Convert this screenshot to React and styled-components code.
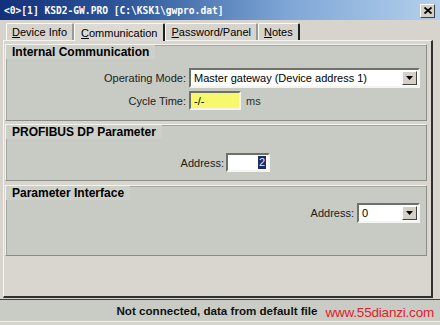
import React from 'react';
import styled, { createGlobalStyle } from 'styled-components';

const Global = createGlobalStyle`
  html, body {
    margin: 0;
    padding: 0;
    background: #d6d4cc;
  }
  * { box-sizing: border-box; }
`;

const Window = styled.div`
  position: relative;
  width: 440px;
  height: 325px;
  display: flex;
  flex-direction: column;
  background: #d6d4cc;
  font-family: "Liberation Sans", Arial, sans-serif;
  font-size: 11px;
  color: #000;
  overflow: hidden;
`;

const TitleBar = styled.div`
  height: 20px;
  flex: none;
  display: flex;
  align-items: center;
  justify-content: space-between;
  padding: 0 5px 0 4px;
  background: linear-gradient(90deg, #13307a 0%, #2f5a9c 30%, #7ea6d6 65%, #b4d0ec 100%);
`;

const Caption = styled.span`
  font-family: "DejaVu Sans Mono", "Liberation Mono", monospace;
  font-weight: bold;
  font-size: 9.6px;
  color: #fff;
  white-space: pre;
`;

const CloseBtn = styled.div`
  width: 15px;
  height: 14px;
  margin-top: 1px;
  display: flex;
  align-items: center;
  justify-content: center;
  background: #d4d0c8;
  border: 1px solid;
  border-color: #fff #404040 #404040 #fff;
`;

const Body = styled.div`
  flex: 1;
  display: flex;
  flex-direction: column;
  padding: 2px 7px 1px 3px;
`;

const TabStrip = styled.div`
  height: 18px;
  display: flex;
  align-items: flex-end;
  padding-left: 3px;
`;

const Tab = styled.div`
  height: ${p => (p.$active ? 18 : 17)}px;
  padding: 0 ${p => p.$pad || 4}px;
  display: flex;
  align-items: center;
  background: ${p => (p.$active ? '#dcdad3' : '#d6d4cc')};
  border-top: 1px solid #fafaf6;
  border-left: 1px solid #fafaf6;
  border-right: 2px solid ${p => (p.$dark ? '#202020' : '#9a9a94')};
  border-radius: 2px 2px 0 0;
  margin-bottom: ${p => (p.$active ? -1 : 0)}px;
  position: relative;
  z-index: ${p => (p.$active ? 2 : 1)};
  white-space: nowrap;
  font-size: 11px;

  u { text-decoration: underline; text-underline-offset: 1px; }
`;

const Panel = styled.div`
  flex: 1;
  display: flex;
  flex-direction: column;
  gap: 3px;
  padding: 3px 4px 0 1px;
  border-top: 1px solid #f4f4f0;
  border-left: 1px solid #f4f4f0;
  border-right: 2px solid #303030;
  border-bottom: 2px solid #303030;
  background: #d8d6cf;
`;

const Group = styled.div`
  height: ${p => p.$h}px;
  flex: none;
  display: flex;
  flex-direction: column;
  margin-top: ${p => p.$mt || 0}px;
  background: #c7cbc3;
  border: 1px solid;
  border-color: #f2f2ee #8c8e88 #8c8e88 #f2f2ee;
  box-shadow: inset 1px 1px 0 #a4a6a0;
`;

const GroupTitle = styled.div`
  align-self: flex-start;
  padding: 1px 6px 0 6px;
  font-weight: bold;
  font-size: 12px;
  line-height: 13px;
  background: #cdd0c9;
`;

const Form = styled.div`
  display: grid;
  grid-template-columns: ${p => p.$label}px 1fr;
  align-items: center;
  row-gap: 3px;
  margin-top: ${p => p.$top}px;
`;

const Controls = styled.div`
  display: flex;
  align-items: center;
`;

const RightRow = styled.div`
  display: flex;
  justify-content: flex-end;
  align-items: center;
  gap: 3px;
  padding-right: 6px;
  margin-top: ${p => p.$top}px;
`;

const Label = styled.span`
  text-align: right;
  padding-right: ${p => p.$gap ?? 3}px;
  color: #202020;
  white-space: nowrap;
`;

const Field = styled.div`
  width: ${p => p.$w}px;
  height: ${p => p.$h || 20}px;
  display: flex;
  align-items: center;
  justify-content: ${p => (p.$end ? 'flex-end' : 'flex-start')};
  padding: 0 ${p => (p.$end ? 2 : 3)}px 0 3px;
  background: ${p => p.$bg || '#fff'};
  border: 2px solid;
  border-color: #6e706a #f4f4f0 #f4f4f0 #6e706a;
  font-size: 11px;
  white-space: nowrap;
  overflow: hidden;
`;

const SelectBox = styled(Field)`
  padding-right: 1px;
  justify-content: space-between;
`;

const DropBtn = styled.div`
  width: 15px;
  height: 14px;
  display: flex;
  align-items: center;
  justify-content: center;
  background: #d4d0c8;
  border: 1px solid;
  border-color: #fff #404040 #404040 #fff;
`;

const Unit = styled.span`
  padding-left: 5px;
  color: #303030;
`;

const Selected = styled.span`
  background: #1c2a6a;
  color: #e8e8f0;
  padding: 0 1px;
  line-height: 13px;
`;

const StatusBar = styled.div`
  height: 23px;
  flex: none;
  margin-bottom: 3px;
  display: flex;
  align-items: center;
  justify-content: center;
  background: #c9ccc5;
  border-top: 1px solid #404040;
  border-bottom: 1px solid #f0f0ec;
  font-weight: bold;
  font-size: 11.6px;
  color: #111;
  padding-right: 6px;
`;

const Watermark = styled.span`
  position: absolute;
  right: 6px;
  bottom: 5px;
  font-family: "Liberation Sans", Arial, sans-serif;
  font-size: 13.5px;
  color: #e0202a;
  letter-spacing: -0.2px;
`;

const Arrow = () => (
  <svg width="7" height="4" viewBox="0 0 7 4">
    <polygon points="0,0 7,0 3.5,4" fill="#000" />
  </svg>
);

const Select = ({ width, value }) => (
  <SelectBox $w={width}>
    <span>{value}</span>
    <DropBtn><Arrow /></DropBtn>
  </SelectBox>
);

const App = () => (
  <>
    <Global />
    <Window>
      <TitleBar>
        <Caption>{'<0>[1] KSD2-GW.PRO [C:\\KSK1\\gwpro.dat]'}</Caption>
        <CloseBtn>
          <svg width="8" height="7" viewBox="0 0 8 7">
            <path d="M0.5 0.5 L7.5 6.5 M7.5 0.5 L0.5 6.5" stroke="#000" strokeWidth="1.8" />
          </svg>
        </CloseBtn>
      </TitleBar>
      <Body>
        <TabStrip>
          <Tab $pad={5}><u>D</u>evice Info</Tab>
          <Tab $active $pad={6} $dark><u>C</u>ommunication</Tab>
          <Tab $pad={5}><u>P</u>assword/Panel</Tab>
          <Tab $pad={5} $dark><u>N</u>otes</Tab>
        </TabStrip>
        <Panel>
          <Group $h={77}>
            <GroupTitle>Internal Communication</GroupTitle>
            <Form $label={183} $top={9}>
              <Label>Operating Mode:</Label>
              <Controls>
                <Select width={231} value="Master gateway (Device address 1)" />
              </Controls>
              <Label>Cycle Time:</Label>
              <Controls>
                <Field $w={52} $h={19} $bg="#f8f86c">-/-</Field>
                <Unit>ms</Unit>
              </Controls>
            </Form>
          </Group>
          <Group $h={57}>
            <GroupTitle>PROFIBUS DP Parameter</GroupTitle>
            <Form $label={220} $top={14}>
              <Label $gap={2}>Address:</Label>
              <Controls>
                <Field $w={44} $h={19} $end><Selected>2</Selected></Field>
              </Controls>
            </Form>
          </Group>
          <Group $h={71} $mt={1}>
            <GroupTitle>Parameter Interface</GroupTitle>
            <RightRow $top={3}>
              <Label $gap={0}>Address:</Label>
              <Select width={63} value="0" />
            </RightRow>
          </Group>
        </Panel>
      </Body>
      <StatusBar>Not connected, data from default file</StatusBar>
      <Watermark>www.55dianzi.com</Watermark>
    </Window>
  </>
);

export default App;
